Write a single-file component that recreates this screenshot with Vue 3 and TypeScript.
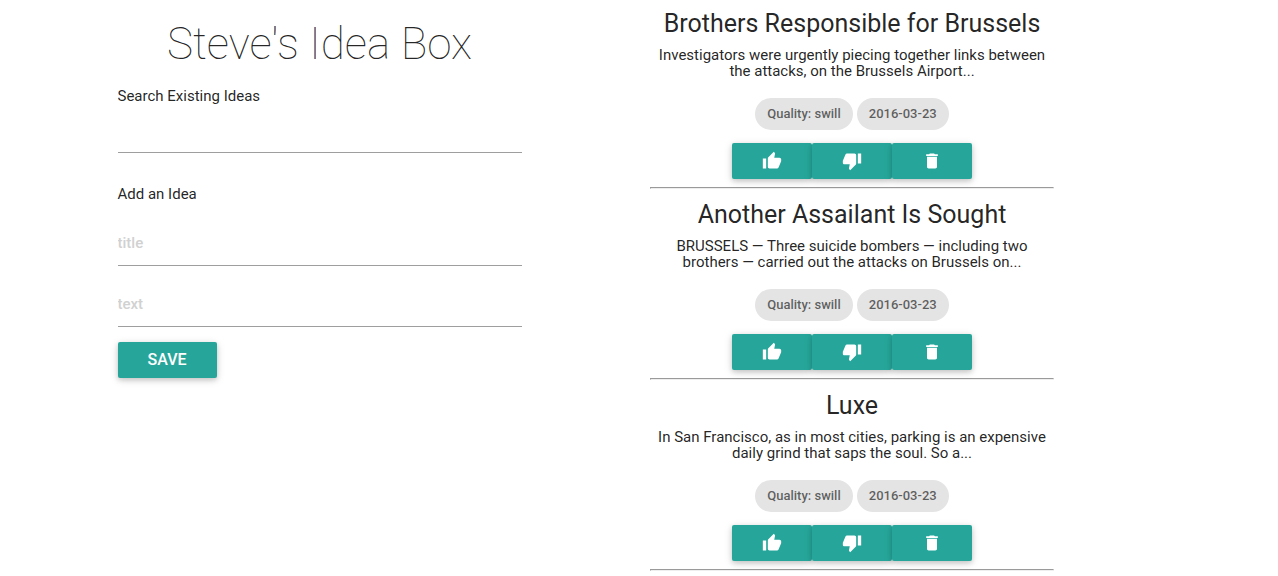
<script setup lang="ts">
import { ref } from 'vue'

interface Idea {
  id: number
  title: string
  body: string
  quality: string
  date: string
}

const search = ref('')
const title = ref('')
const text = ref('')

const ideas: Idea[] = [
  {
    id: 1,
    title: 'Brothers Responsible for Brussels',
    body: 'Investigators were urgently piecing together links between the attacks, on the Brussels Airport...',
    quality: 'swill',
    date: '2016-03-23',
  },
  {
    id: 2,
    title: 'Another Assailant Is Sought',
    body: 'BRUSSELS — Three suicide bombers — including two brothers — carried out the attacks on Brussels on...',
    quality: 'swill',
    date: '2016-03-23',
  },
  {
    id: 3,
    title: 'Luxe',
    body: 'In San Francisco, as in most cities, parking is an expensive daily grind that saps the soul. So a...',
    quality: 'swill',
    date: '2016-03-23',
  },
]

const actions = [
  {
    name: 'Thumbs up',
    path: 'M1 21h4V9H1v12zm22-11c0-1.1-.9-2-2-2h-6.31l.95-4.57.03-.32c0-.41-.17-.79-.44-1.06L14.17 1 7.59 7.59C7.22 7.95 7 8.45 7 9v10c0 1.1.9 2 2 2h9c.83 0 1.54-.5 1.84-1.22l3.02-7.05c.09-.23.14-.47.14-.73v-2z',
  },
  {
    name: 'Thumbs down',
    path: 'M15 3H6c-.83 0-1.54.5-1.84 1.22l-3.02 7.05c-.09.23-.14.47-.14.73v2c0 1.1.9 2 2 2h6.31l-.95 4.57-.03.32c0 .41.17.79.44 1.06L9.83 23l6.59-6.59c.36-.36.58-.86.58-1.41V5c0-1.1-.9-2-2-2zm4 0v12h4V3h-4z',
  },
  {
    name: 'Delete',
    path: 'M6 19c0 1.1.9 2 2 2h8c1.1 0 2-.9 2-2V7H6v12zM19 4h-3.5l-1-1h-5l-1 1H5v2h14V4z',
  },
]
</script>

<template>
  <main class="page">
    <section class="panel">
      <h1>Steve's Idea Box</h1>
      <label class="caption" for="search">Search Existing Ideas</label>
      <input id="search" v-model="search" class="field" type="text" />
      <form class="idea-form" aria-labelledby="add-caption" @submit.prevent>
        <p id="add-caption" class="caption">Add an Idea</p>
        <input v-model="title" class="field" type="text" placeholder="title" aria-label="title" />
        <input v-model="text" class="field" type="text" placeholder="text" aria-label="text" />
        <button class="btn" type="submit">SAVE</button>
      </form>
    </section>

    <section class="ideas">
      <article v-for="idea in ideas" :key="idea.id" class="idea">
        <h2>{{ idea.title }}</h2>
        <p class="body">{{ idea.body }}</p>
        <div class="chips">
          <span class="chip">Quality: {{ idea.quality }}</span>
          <span class="chip">{{ idea.date }}</span>
        </div>
        <div class="actions">
          <button v-for="action in actions" :key="action.name" class="btn" type="button" :aria-label="action.name">
            <svg viewBox="0 0 24 24" aria-hidden="true"><path :d="action.path" /></svg>
          </button>
        </div>
        <hr />
      </article>
    </section>
  </main>
</template>

<style>
body {
  margin: 0;
  background: #fff;
}
</style>

<style scoped>
.page {
  display: grid;
  grid-template-columns: 1fr 4fr 1fr 4fr 2fr;
  font: 400 15px/16px Roboto, sans-serif;
  color: rgba(0, 0, 0, 0.87);
}

.panel,
.ideas {
  min-width: 0;
  padding: 0 11px;
}

.panel {
  grid-column: 2;
}

.ideas {
  grid-column: 4;
  padding-top: 10px;
  text-align: center;
}

h1 {
  margin: 20px 0;
  font-size: 44px;
  font-weight: 100;
  line-height: 48px;
  text-align: center;
}

.caption {
  display: block;
  margin: 0;
}

.field {
  display: block;
  box-sizing: border-box;
  width: 100%;
  height: 46px;
  margin: 3px 0 15px;
  padding: 0;
  border: 0;
  border-bottom: 1px solid #9e9e9e;
  border-radius: 0;
  outline: none;
  background: transparent;
  color: inherit;
  font: inherit;
}

.field::placeholder {
  color: #d1d1d1;
  font-weight: 500;
  opacity: 1;
}

.idea-form {
  padding-top: 18px;
}

.idea-form .caption {
  margin-bottom: 18px;
}

.btn {
  height: 36px;
  padding: 0 30px;
  border: 0;
  border-radius: 2px;
  background: #26a69a;
  box-shadow: 0 2px 5px rgba(0, 0, 0, 0.16), 0 2px 10px rgba(0, 0, 0, 0.12);
  color: #fff;
  font: 500 16px/36px Roboto, sans-serif;
  cursor: pointer;
}

h2 {
  margin: 0 0 9px;
  font-size: 25px;
  font-weight: 400;
  line-height: 28px;
}

.body {
  margin: 0 0 19px;
}

.chips {
  display: flex;
  justify-content: center;
  gap: 4px;
  margin-bottom: 13px;
}

.chip {
  padding: 0 12px;
  border-radius: 16px;
  background: #e4e4e4;
  color: rgba(0, 0, 0, 0.6);
  font-size: 13px;
  font-weight: 500;
  line-height: 32px;
}

.actions {
  display: flex;
  justify-content: center;
}

.actions svg {
  display: block;
  width: 20px;
  height: 20px;
  fill: currentColor;
}

hr {
  margin: 8px 0 12px;
  border: 1px solid;
  border-color: #9a9a9a #eee #eee #9a9a9a;
}
</style>
